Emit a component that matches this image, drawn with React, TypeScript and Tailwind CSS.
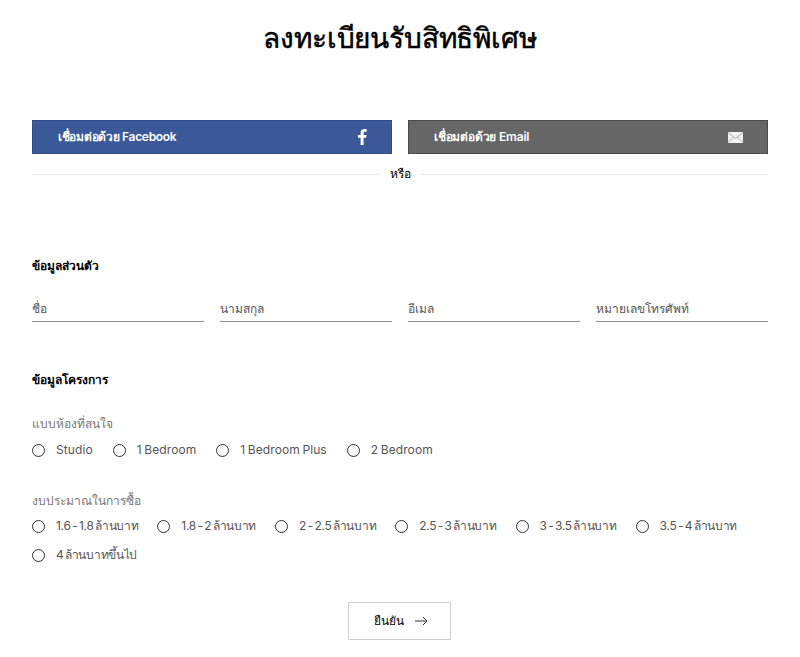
const fields = ['ชื่อ', 'นามสกุล', 'อีเมล', 'หมายเลขโทรศัพท์']
const rooms = ['Studio', '1 Bedroom', '1 Bedroom Plus', '2 Bedroom']
const budgets = [
  '1.6 - 1.8 ล้านบาท',
  '1.8 - 2 ล้านบาท',
  '2 - 2.5 ล้านบาท',
  '2.5 - 3 ล้านบาท',
  '3 - 3.5 ล้านบาท',
  '3.5 - 4 ล้านบาท',
  '4 ล้านบาทขึ้นไป',
]

function Radio({ label, tight }: { label: string; tight?: boolean }) {
  return (
    <label className={tight ? 'flex items-center h-[20px] mr-[19px]' : 'flex items-center h-[20px] mr-[20px]'}>
      <span className="w-[13px] h-[13px] rounded-full border border-[#333] shrink-0" />
      <span className={tight
        ? 'ml-[11px] text-[12px] text-[#555] tracking-[-0.3px] [word-spacing:-1.5px]'
        : 'ml-[11px] text-[12px] text-[#555] tracking-[0.1px] [word-spacing:-1px]'}>{label}</span>
    </label>
  )
}

export default function App() {
  return (
    <div className="w-[800px] h-[657px] bg-white overflow-hidden px-[32px] font-['Inter','Noto_Sans',sans-serif] text-black">
      <h1 className="text-center text-[28px] leading-[36px] font-normal tracking-[-0.15px] [-webkit-text-stroke:0.5px_#000] mt-[20px]">ลงทะเบียนรับสิทธิพิเศษ</h1>

      {/* Social buttons */}
      <div className="grid grid-cols-2 gap-[16px] mt-[64px]">
        <button className="h-[34px] bg-[#3b5998] border border-[#2f4a86] flex items-center justify-between pl-[25px] pr-[24px] text-white text-[12px] font-semibold tracking-[-0.3px]">
          <span>เชื่อมต่อด้วย Facebook</span>
          <svg width="9" height="16" viewBox="0 0 9 16" fill="#fff">
            <path d="M2.6 16V8.8H0V6h2.6V3.9C2.6 1.3 4.1 0 6.4 0c1.1 0 2 .1 2.3.1v2.6H7.1C5.900 2.700 5.600 3.300 5.600 4.200V6h2.900l-.4 2.800H5.600V16z" />
          </svg>
        </button>
        <button className="h-[34px] bg-[#666666] border border-[#4a4a4a] flex items-center justify-between pl-[25px] pr-[24px] text-white text-[12px] font-semibold tracking-[-0.2px]">
          <span>เชื่อมต่อด้วย Email</span>
          <svg width="15" height="11" viewBox="0 0 15 11">
            <rect width="15" height="11" fill="#f2f2f2" />
            <path d="M0 0.5L7.500 6.500L15 0.500M0 10.500L5.500 5M15 10.500L9.500 5" fill="none" stroke="#9a9a9a" strokeWidth="0.8" />
          </svg>
        </button>
      </div>

      {/* Divider */}
      <div className="flex items-center gap-[10px] mt-[11px] h-[18px]">
        <div className="flex-1 h-px bg-[#e6e6e6]" />
        <span className="text-[12px] leading-[18px]">หรือ</span>
        <div className="flex-1 h-px bg-[#e6e6e6]" />
      </div>

      <h2 className="text-[12px] leading-[18px] font-semibold mt-[74px]">ข้อมูลส่วนตัว</h2>
      <div className="grid grid-cols-4 gap-[16px] mt-[16px]">
        {fields.map(f => (
          <div key={f} className="h-[31px] pt-[7px] border-b border-[#8c8c8c] text-[12px] leading-[22px] text-[#555]">{f}</div>
        ))}
      </div>

      <h2 className="text-[12px] leading-[18px] font-semibold mt-[49px]">ข้อมูลโครงการ</h2>

      <div className="text-[12px] leading-[18px] text-[#777] mt-[26px]">แบบห้องที่สนใจ</div>
      <div className="flex flex-wrap mt-[7px]">
        {rooms.map(r => <Radio key={r} label={r} />)}
      </div>

      <div className="text-[12px] leading-[18px] text-[#777] mt-[32px]">งบประมาณในการซื้อ</div>
      <div className="flex flex-wrap gap-y-[9px] mt-[6px]">
        {budgets.map(b => <Radio key={b} label={b} tight />)}
      </div>

      <div className="flex justify-center mt-[37px] pr-[2px]">
        <button className="w-[103px] h-[38px] pl-[3px] border border-[#cfcfcf] flex items-center justify-center gap-[11px] text-[12px]">
          <span>ยืนยัน</span>
          <svg width="13" height="10" viewBox="0 0 13 10" fill="none" stroke="#333" strokeWidth="1">
            <path d="M0 5H12M8 1L12 5L8 9" />
          </svg>
        </button>
      </div>
    </div>
  )
}
